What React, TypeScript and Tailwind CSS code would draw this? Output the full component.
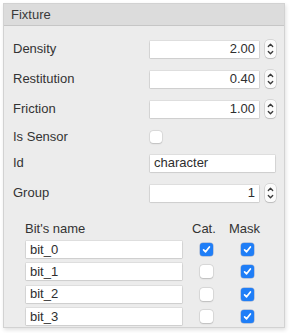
import React from 'react';

const font = { fontFamily: '"Liberation Sans", Arial, sans-serif' };

const Stepper: React.FC = () => (
  <div className="ml-[6px] flex h-[18px] w-[11px] flex-col items-center justify-center rounded-[4px] bg-[#fbfbfb] shadow-[0_0_0_0.5px_rgba(0,0,0,0.18),0_1px_1px_rgba(0,0,0,0.12)]">
    <svg width="7" height="16" viewBox="0 0 7 16" fill="none" stroke="#3a3a3a" strokeWidth="1.3" strokeLinecap="round" strokeLinejoin="round">
      <path d="M1.3 5.5 L3.5 3.2 L5.7 5.5" />
      <path d="M1.3 10.5 L3.5 12.8 L5.7 10.5" />
    </svg>
  </div>
);

const Field: React.FC<{ value: string; width: string; right?: boolean }> = ({ value, width, right }) => (
  <div
    className={`flex h-[17px] items-center bg-white px-[4px] text-[13px] text-[#2e2e2e] shadow-[0_0_0_0.5px_rgba(0,0,0,0.12),0_0.5px_1.5px_rgba(0,0,0,0.18)] ${width} ${right ? 'justify-end' : 'justify-start'}`}
  >
    {value}
  </div>
);

const Check: React.FC<{ on: boolean }> = ({ on }) =>
  on ? (
    <div className="flex h-[13px] w-[13px] items-center justify-center rounded-[3px] bg-[#1f7ef7] shadow-[0_0_0_0.5px_rgba(0,60,160,0.4)]">
      <svg width="9" height="9" viewBox="0 0 9 9" fill="none" stroke="white" strokeWidth="1.7" strokeLinecap="round" strokeLinejoin="round">
        <path d="M1.6 4.8 L3.6 6.8 L7.4 2" />
      </svg>
    </div>
  ) : (
    <div className="h-[13px] w-[13px] rounded-[3px] bg-white shadow-[0_0_0_0.5px_rgba(0,0,0,0.12),0_0.5px_1.5px_rgba(0,0,0,0.15)]" />
  );

const numberRows = [
  { label: 'Density', value: '2.00', mt: 'mt-[14px]' },
  { label: 'Restitution', value: '0.40', mt: 'mt-[12px]' },
  { label: 'Friction', value: '1.00', mt: 'mt-[12px]' },
];

const bits = [
  { name: 'bit_0', cat: true, mask: true },
  { name: 'bit_1', cat: false, mask: true },
  { name: 'bit_2', cat: false, mask: true },
  { name: 'bit_3', cat: false, mask: true },
];

export default function App() {
  return (
    <div className="h-[333px] w-[290px] bg-white pl-[3px] pt-[3px]" style={font}>
      <div className="flex h-[325px] w-[282px] flex-col border border-[#d2d2d2] bg-[#ececec] shadow-[1px_2px_4px_rgba(0,0,0,0.12)]">
        {/* Header */}
        <div className="flex h-[22px] shrink-0 items-center border-b border-[#c6c6c6] bg-[#dcdcdc] pl-[7px] text-[13px] text-[#3a3a3a]">
          Fixture
        </div>

        {/* Properties */}
        <div className="flex flex-col pl-[9px] text-[13px] text-[#333]">
          {numberRows.map((r) => (
            <div key={r.label} className={`flex h-[18px] items-center ${r.mt}`}>
              <span className="w-[137px]">{r.label}</span>
              <Field value={r.value} width="w-[109px]" right />
              <Stepper />
            </div>
          ))}

          <div className="mt-[10px] flex h-[18px] items-center">
            <span className="w-[137px]">Is Sensor</span>
            <div className="h-[12px] w-[12px] rounded-[3px] bg-white shadow-[0_0_0_0.5px_rgba(0,0,0,0.1),0_0.5px_1.5px_rgba(0,0,0,0.15)]" />
          </div>

          <div className="mt-[8px] flex h-[18px] items-center">
            <span className="w-[137px]">Id</span>
            <Field value="character" width="w-[125px]" />
          </div>

          <div className="mt-[12px] flex h-[18px] items-center">
            <span className="w-[137px]">Group</span>
            <Field value="1" width="w-[109px]" right />
            <Stepper />
          </div>

          {/* Bits table */}
          <div className="mt-[20px] flex h-[14px] items-center pl-[12px]">
            <span className="w-[167px]">Bit's name</span>
            <span className="w-[37px]">Cat.</span>
            <span>Mask</span>
          </div>
          <div className="mt-[5px] flex flex-col gap-[5.3px] pl-[13px]">
            {bits.map((b) => (
              <div key={b.name} className="flex h-[17px] items-center">
                <Field value={b.name} width="w-[156px]" />
                <div className="ml-[18px]">
                  <Check on={b.cat} />
                </div>
                <div className="ml-[28px]">
                  <Check on={b.mask} />
                </div>
              </div>
            ))}
          </div>
        </div>
      </div>
    </div>
  );
}
